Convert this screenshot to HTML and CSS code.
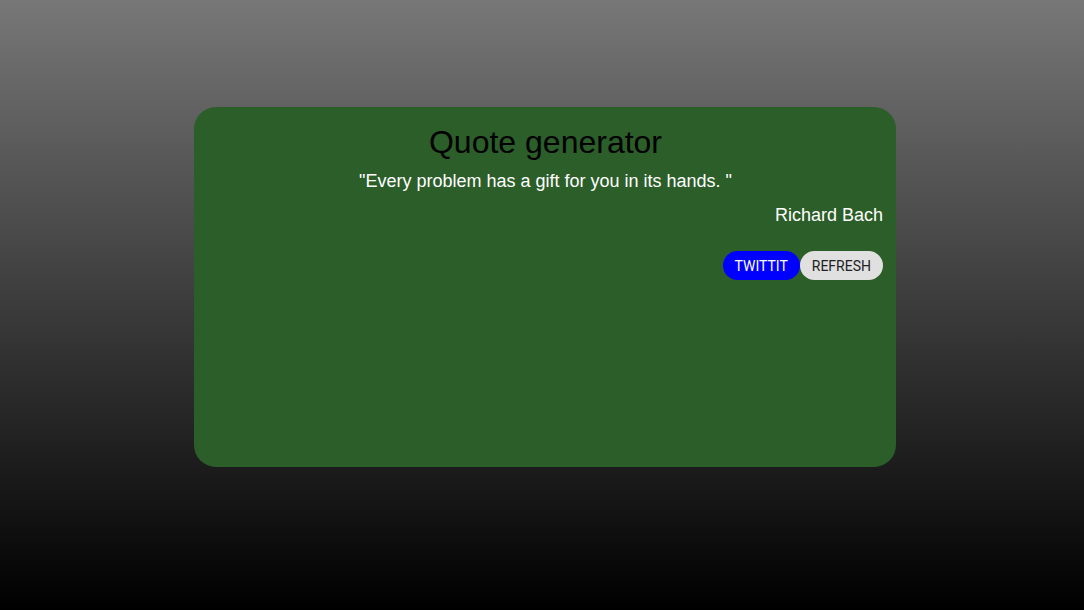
FILE: index.html
```html
<!DOCTYPE html>
<html>
<head>
<meta charset="utf-8">
<link rel="stylesheet" href="styles.css">
</head>
<body>
<main class="card">
  <h1 class="title">Quote generator</h1>
  <p class="quote">"Every problem has a gift for you in its hands. "</p>
  <p class="author">Richard Bach</p>
  <div class="actions">
    <button class="btn btn-tweet">TWITTIT</button>
    <button class="btn btn-refresh">REFRESH</button>
  </div>
</main>
</body>
</html>
```
FILE: styles.css
```css
html, body {
  margin: 0;
  padding: 0;
  height: 100%;
}
body {
  background: linear-gradient(to bottom, #777777 0%, #000000 100%);
  font-family: "Liberation Sans", Arial, sans-serif;
  overflow: hidden;
}
.card {
  box-sizing: border-box;
  width: 702px;
  height: 360px;
  margin: 107px 0 0 194px;
  padding: 14px 13px 14px 14px;
  background: #2b5e29;
  border-radius: 22px;
  display: flex;
  flex-direction: column;
}
.title {
  margin: 0;
  font-size: 32px;
  font-weight: normal;
  color: #000;
  text-align: center;
  line-height: 42px;
}
.quote {
  margin: 6px 0 0;
  font-size: 18px;
  color: #fff;
  text-align: center;
  line-height: 24px;
}
.author {
  margin: 10px 0 0;
  font-size: 18px;
  color: #fff;
  text-align: right;
  line-height: 24px;
}
.actions {
  display: flex;
  justify-content: flex-end;
  margin-top: 24px;
}
.btn {
  border: none;
  height: 29px;
  padding: 0 12px;
  border-radius: 15px;
  font-family: Roboto, "Liberation Sans", Arial, sans-serif;
  font-size: 14px;
}
.btn-tweet {
  background: #0000ff;
  color: #fff;
}
.btn-refresh {
  background: #e0e0e0;
  color: #222;
}
```
